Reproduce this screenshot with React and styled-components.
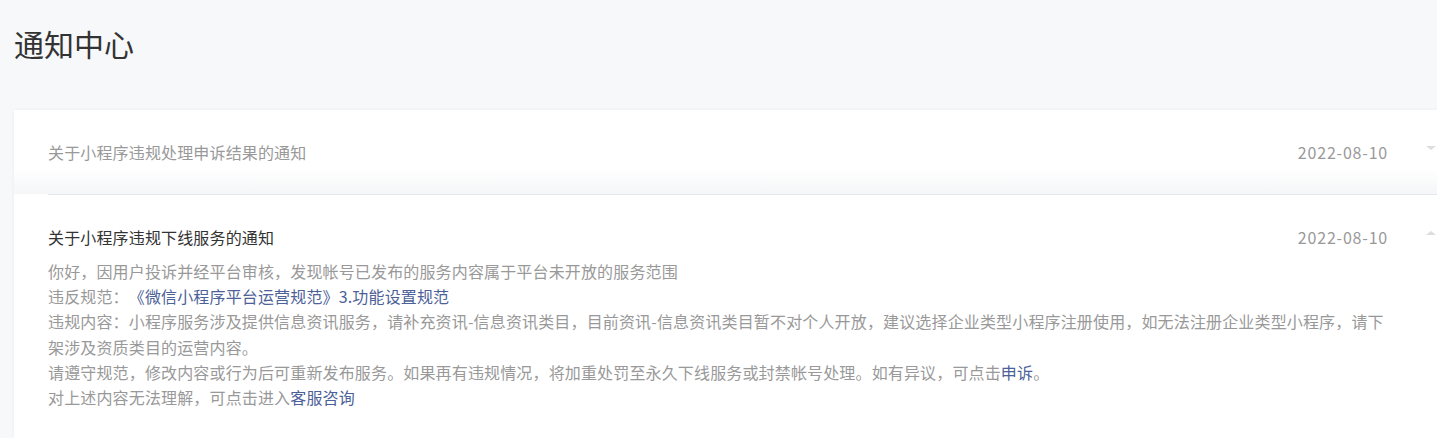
import React from "react";
import styled, { createGlobalStyle } from "styled-components";

const Global = createGlobalStyle`
  html, body { margin: 0; padding: 0; }
  body {
    background: #f7f8fa;
    font-family: "Microsoft YaHei", "Noto Sans CJK SC", "Noto Sans", sans-serif;
    overflow: hidden;
    text-spacing-trim: space-all;
  }
`;

const Page = styled.div`
  padding: 0 0 0 14px;
  width: 1470px;
`;

const Title = styled.h1`
  margin: 0;
  padding: 23px 0 0;
  height: 110px;
  box-sizing: border-box;
  font-size: 30px;
  line-height: 40px;
  font-weight: 400;
  color: #333;
`;

const Card = styled.div`
  width: 1456px;
  background: #fff;
  border-radius: 4px;
  box-shadow: 0 0 4px rgba(0, 0, 0, 0.05);
  padding-bottom: 40px;
`;

const Item = styled.div`
  background: ${(p) =>
    p.$open ? "#fff" : "linear-gradient(to bottom, #fff 70%, #f5f6f8 100%)"};
`;

const Header = styled.div`
  display: flex;
  align-items: center;
  padding: 30px 34px 30px 34px;
  padding-bottom: ${(p) => (p.$open ? "10px" : "30px")};
`;

const ItemTitle = styled.div`
  flex: 1;
  font-size: 16px;
  line-height: 24px;
  letter-spacing: 0.15px;
  color: ${(p) => (p.$open ? "#333" : "#999")};
`;

const DateText = styled.div`
  font-size: 16px;
  line-height: 24px;
  letter-spacing: 0.8px;
  color: #999;
  margin-right: 38px;
`;

const Caret = styled.span`
  width: 0;
  height: 0;
  border-left: 5px solid transparent;
  border-right: 5px solid transparent;
  ${(p) =>
    p.$up
      ? "border-bottom: 4px solid #ddd;"
      : "border-top: 4px solid #ddd;"}
  margin-top: -8px;
`;

const Divider = styled.div`
  height: 1px;
  background: #e6e7ea;
  margin-left: 34px;
`;

const Body = styled.div`
  padding: 0 34px;
  font-size: 16px;
  line-height: 25.2px;
  letter-spacing: 0.15px;
  color: #999;
`;

const Line = styled.p`
  margin: 0;
`;

const Link = styled.a`
  color: #4d6199;
  text-decoration: none;
`;

export default function App() {
  return (
    <>
      <Global />
      <Page>
        <Title>通知中心</Title>
        <Card>
          <Item>
            <Header>
              <ItemTitle>关于小程序违规处理申诉结果的通知</ItemTitle>
              <DateText>2022-08-10</DateText>
              <Caret />
            </Header>
          </Item>
          <Divider />
          <Item $open>
            <Header $open>
              <ItemTitle $open>关于小程序违规下线服务的通知</ItemTitle>
              <DateText>2022-08-10</DateText>
              <Caret $up />
            </Header>
            <Body>
              <Line>你好，因用户投诉并经平台审核，发现帐号已发布的服务内容属于平台未开放的服务范围</Line>
              <Line>
                违反规范：<Link href="#">《微信小程序平台运营规范》3.功能设置规范</Link>
              </Line>
              <Line>
                违规内容：小程序服务涉及提供信息资讯服务，请补充资讯-信息资讯类目，目前资讯-信息资讯类目暂不对个人开放，建议选择企业类型小程序注册使用，如无法注册企业类型小程序，请下
                <br />
                架涉及资质类目的运营内容。
              </Line>
              <Line>
                请遵守规范，修改内容或行为后可重新发布服务。如果再有违规情况，将加重处罚至永久下线服务或封禁帐号处理。如有异议，可点击<Link href="#">申诉</Link>。
              </Line>
              <Line>
                对上述内容无法理解，可点击进入<Link href="#">客服咨询</Link>
              </Line>
            </Body>
          </Item>
        </Card>
      </Page>
    </>
  );
}
